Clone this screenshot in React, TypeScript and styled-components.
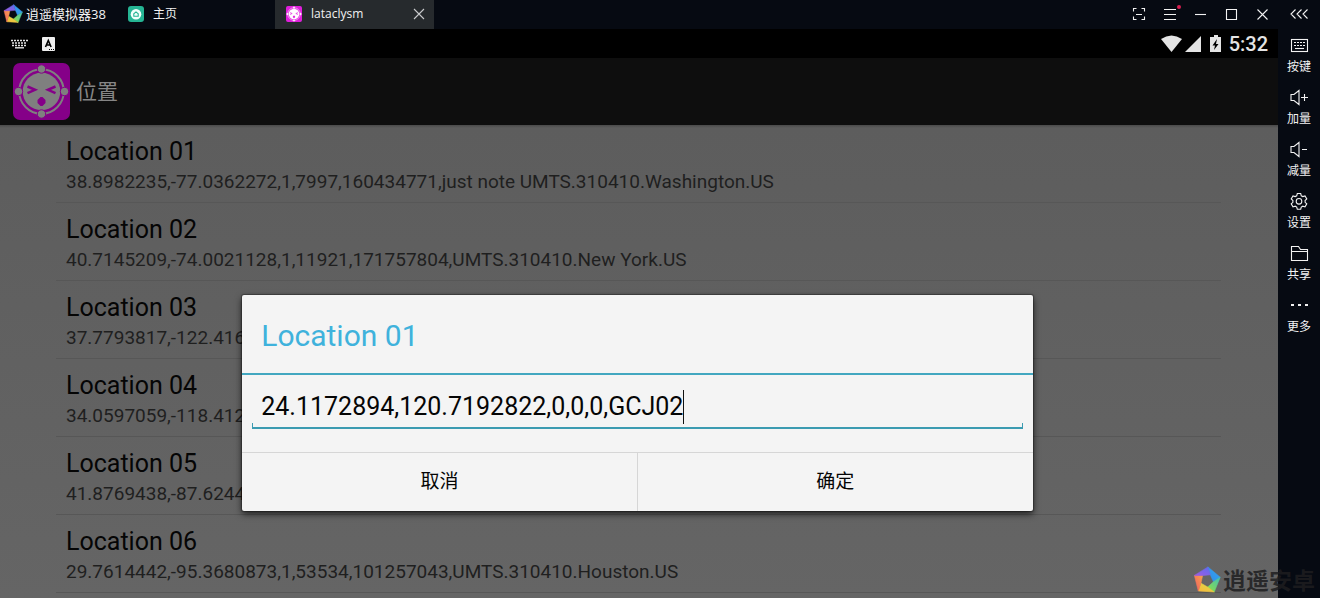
import React, { useId, useState } from "react";
import styled, { createGlobalStyle } from "styled-components";

const GlobalStyle = createGlobalStyle`
  *, *::before, *::after { box-sizing: border-box; }
  body { margin: 0; background: #060a12; overflow: hidden; }
  button { margin: 0; padding: 0; border: 0; background: none; color: inherit; font: inherit; cursor: pointer; }
`;

const uiFont = `"Open Sans", "Noto Sans CJK SC", sans-serif`;
const androidFont = `Roboto, "Noto Sans CJK SC", sans-serif`;

const Shell = styled.div`
  position: relative;
  display: flex;
  flex-direction: column;
  height: 100vh;
  overflow: hidden;
  background: #060a12;
  color: #f2f2f2;
  font-family: ${uiFont};
`;

const TitleBar = styled.header`
  display: flex;
  align-items: stretch;
  flex: none;
  height: 29px;
  font-size: 12px;
  line-height: 28px;
`;

const Brand = styled.h1`
  display: flex;
  align-items: center;
  gap: 3px;
  margin: 0;
  padding-left: 3px;
  padding-bottom: 2px;
  width: 117px;
  font-size: 13px;
  font-weight: 400;
  line-height: 28px;
  white-space: nowrap;
`;

const Tab = styled.button<{ $active?: boolean }>`
  display: flex;
  align-items: center;
  gap: 9px;
  width: ${(p) => (p.$active ? "134px" : "158px")};
  padding: 0 0 2px 11px;
  text-align: left;
`;

const ActiveTab = styled.div`
  display: flex;
  width: 159px;
  background: #262a2d;
`;

const TabClose = styled.button`
  display: grid;
  place-items: center;
  width: 20px;
  padding-bottom: 1px;
  color: #c8cacc;
`;

const WindowControls = styled.div`
  display: flex;
  margin-left: auto;
`;

const WindowButton = styled.button<{ $last?: boolean }>`
  display: grid;
  place-items: center;
  width: ${(p) => (p.$last ? "42px" : "31px")};
  padding-bottom: 2px;
`;

const Body = styled.div`
  display: flex;
  flex: 1;
  min-height: 0;
`;

const Device = styled.main`
  position: relative;
  display: flex;
  flex-direction: column;
  flex: 1;
  min-width: 0;
  overflow: hidden;
  font-family: ${androidFont};
`;

const StatusBar = styled.div`
  display: flex;
  align-items: center;
  flex: none;
  height: 29px;
  padding: 0 10px 0 11px;
  gap: 14px;
  background: #000;
  color: #e4e4e4;
`;

const StatusRight = styled.div`
  display: flex;
  align-items: center;
  gap: 7px;
  margin-left: auto;
  font-size: 20px;
  font-weight: 500;
  line-height: 29px;
`;

const StatusTime = styled.time`
  padding-top: 2px;
`;

const AppBar = styled.div`
  display: flex;
  align-items: center;
  flex: none;
  gap: 6px;
  height: 67px;
  padding-left: 13px;
  background: #0e0e0e;
  color: #868686;
`;

const AppTitle = styled.h2`
  margin: 0;
  font-size: 21px;
  font-weight: 400;
  line-height: 30px;
`;

const List = styled.ul`
  flex: 1;
  margin: 0;
  padding: 0 57px 0 56px;
  list-style: none;
  background: linear-gradient(#4a4a4a, #5d5d5d 3px, #656565);
`;

const Row = styled.li`
  height: 78px;
  padding: 12px 10px 0;
  border-bottom: 1px solid #575757;
  white-space: nowrap;
`;

const RowTitle = styled.div`
  color: #050505;
  font-size: 25px;
  line-height: 30px;
`;

const RowDetail = styled.div`
  color: #1f1f1f;
  font-size: 19px;
  line-height: 30px;
`;

const Scrim = styled.div`
  position: absolute;
  inset: 29px 0 0;
  display: flex;
  align-items: flex-start;
  justify-content: center;
  padding: 237px 3px 0 0;
`;

const Dialog = styled.form`
  width: 62%;
  border-radius: 2px;
  background: #f4f4f4;
  color: #050505;
  box-shadow: 0 3px 7px rgba(0, 0, 0, 0.7), 0 0 1px 1px rgba(0, 0, 0, 0.3);
`;

const DialogTitle = styled.label`
  display: block;
  height: 80px;
  padding: 23px 19px 0;
  border-bottom: 2px solid #42a7c0;
  color: #3fb2dc;
  font-size: 30px;
  line-height: 36px;
`;

const Field = styled.div`
  display: flex;
  align-items: center;
  height: 54px;
  margin: 0 10px 23px;
  padding: 10px 9px 0;
  background:
    linear-gradient(#3b9bb1, #3b9bb1) left bottom / 100% 2px no-repeat,
    linear-gradient(#3b9bb1, #3b9bb1) left bottom / 1px 6px no-repeat,
    linear-gradient(#3b9bb1, #3b9bb1) right bottom / 1px 6px no-repeat;
`;

const Input = styled.input`
  field-sizing: content;
  max-width: 100%;
  padding: 0;
  border: 0;
  outline: 0;
  background: none;
  color: #050505;
  caret-color: transparent;
  font-family: ${androidFont};
  font-size: 25px;
  line-height: 34px;
`;

const Caret = styled.span`
  flex: none;
  width: 1px;
  height: 34px;
  background: #111;
`;

const DialogActions = styled.div`
  display: flex;
  height: 59px;
  border-top: 1px solid #d6d6d6;
`;

const DialogButton = styled.button`
  flex: 1;
  font-size: 19px;
  line-height: 28px;

  & + & { border-left: 1px solid #d6d6d6; }
`;

const SideBar = styled.nav`
  display: flex;
  flex-direction: column;
  flex: none;
  width: 42px;
`;

const SideButton = styled.button`
  display: flex;
  flex-direction: column;
  align-items: center;
  gap: 3px;
  height: 52px;
  padding-top: 6px;
  font-size: 12px;
  line-height: 18px;
`;

const Watermark = styled.div`
  position: absolute;
  right: 5px;
  bottom: 3px;
  display: flex;
  align-items: center;
  gap: 2px;
  color: rgba(30, 30, 32, 0.85);
  font-size: 23px;
  font-weight: 700;
  line-height: 30px;
  pointer-events: none;
`;

const wheelColors = [
  ["#35a3f3", "#2f8fe6"],
  ["#3fc0ba", "#94e03c"],
  ["#d8e04a", "#f9b53a"],
  ["#f9a04b", "#ee5d62"],
  ["#5a6cf0", "#a05be0"],
];

const ringPoint = (radius: number, degrees: number) => {
  const a = (degrees * Math.PI) / 180;
  return `${(14 + radius * Math.sin(a)).toFixed(2)},${(14.5 - radius * Math.cos(a)).toFixed(2)}`;
};

function Pinwheel({ size }: { size: number }) {
  const id = useId();
  return (
    <svg width={size} height={size} viewBox="0 0 28 28" aria-hidden="true">
      <defs>
        {wheelColors.map(([a, b], i) => (
          <linearGradient key={i} id={`${id}${i}`} x1="1" y1="0" x2="0" y2="1">
            <stop offset="0" stopColor={a} />
            <stop offset="1" stopColor={b} />
          </linearGradient>
        ))}
      </defs>
      {wheelColors.map((_, i) => {
        const d = i * 72 + 4;
        return (
          <polygon
            key={i}
            fill={`url(#${id}${i})`}
            stroke={`url(#${id}${i})`}
            strokeWidth="0.6"
            strokeLinejoin="round"
            points={[ringPoint(13.6, d), ringPoint(13.6, d + 72), ringPoint(6.6, d + 98), ringPoint(6.6, d + 26)].join(" ")}
          />
        );
      })}
    </svg>
  );
}

function FaceIcon({ size, back, face }: { size: number; back: string; face: string }) {
  return (
    <svg width={size} height={size} viewBox="0 0 57 57" fill="none" aria-hidden="true">
      <rect width="57" height="57" rx="7" fill={back} />
      <circle cx="28.5" cy="28.5" r="22.3" stroke={face} strokeWidth="2" />
      <circle cx="28.5" cy="28.5" r="18.8" fill={face} />
      <g fill={face} stroke={back} strokeWidth="1">
        <circle cx="28.5" cy="6" r="4.2" />
        <circle cx="5.5" cy="28.5" r="4.2" />
        <circle cx="51.5" cy="28.5" r="4.2" />
        <circle cx="28.5" cy="51" r="4.2" />
      </g>
      <path d="M14.500 23.500l7.500 3.300-7.500 3.300M42.500 23.500l-7.500 3.300 7.500 3.300" stroke={back} strokeWidth="2.500" />
      <path d="M27.500 34h2l3 3v3l-3 3h-2l-3-3v-3z" fill={back} />
    </svg>
  );
}

const HomeIcon = () => (
  <svg width="16" height="16" viewBox="0 0 16 16" fill="none" aria-hidden="true">
    <rect width="16" height="16" rx="3" fill="#25b594" />
    <circle cx="8" cy="8.300" r="5.300" fill="#f2fffb" />
    <path d="M5.800 10.300V7.800L8 5.900l2.200 1.900v2.500z" stroke="#25b594" strokeWidth="1.100" />
  </svg>
);

const Line = ({ w = 16, h = 16, d, children }: { w?: number; h?: number; d?: string; children?: React.ReactNode }) => (
  <svg width={w} height={h} viewBox={`0 0 ${w} ${h}`} fill="none" stroke="currentColor" strokeWidth="1.100" aria-hidden="true">
    {d && <path d={d} />}
    {children}
  </svg>
);

const controls = [
  { name: "全屏", icon: <Line d="M2.500 5.500v-3h3M10.500 2.500h3v3M13.500 10.500v3h-3M5.500 13.500h-3v-3M5 8.500h6" /> },
  {
    name: "菜单",
    icon: (
      <Line w={22} h={20} d="M5 5.500h12M5 10.500h12M5 15.500h12">
        <circle cx="20" cy="3" r="2" fill="#d81e50" stroke="none" />
      </Line>
    ),
  },
  { name: "最小化", icon: <Line d="M2 8.500h11" /> },
  { name: "最大化", icon: <Line d="M2.500 3.500h10v10h-10z" /> },
  { name: "关闭", icon: <Line d="M2.500 3.500l10 10M12.500 3.500l-10 10" /> },
];

const speaker = "M2 7.500v6h3l5 4v-14l-5 4z";
const gear =
  "M8.300 2.500h3.400l.6 2.300 1.500.8 2.200-.7 1.800 3-1.700 1.600v1.800l1.700 1.600-1.800 3-2.200-.7-1.500.8-.6 2.200H8.300l-.6-2.200-1.500-.8-2.200.7-1.800-3 1.700-1.600V9.500L2.200 7.900l1.800-3 2.200.7 1.500-.8z";

const tools = [
  {
    label: "按键",
    icon: (
      <Line w={20} h={20}>
        <rect x="2.500" y="4.500" width="16" height="12" />
        <path d="M5 7.500h11M5 10.500h11" strokeDasharray="2 1" />
        <path d="M6 13.500h9" />
      </Line>
    ),
  },
  { label: "加量", icon: <Line w={20} h={20} d={`${speaker}M12 10.500h7M15.500 7v7`} /> },
  { label: "减量", icon: <Line w={20} h={20} d={`${speaker}M13 10.500h5`} /> },
  {
    label: "设置",
    icon: (
      <Line w={20} h={20} d={gear}>
        <circle cx="10" cy="10.300" r="2.800" />
      </Line>
    ),
  },
  { label: "共享", icon: <Line w={20} h={20} d="M2.500 17.500v-14h7l2 3h7v11zM2.500 8.500h16" /> },
  {
    label: "更多",
    icon: (
      <Line w={20} h={20}>
        <path d="M2 10h3M9 10h3M16 10h3" strokeWidth="2" />
      </Line>
    ),
  },
];

const locations = [
  ["Location 01", "38.8982235,-77.0362272,1,7997,160434771,just note UMTS.310410.Washington.US"],
  ["Location 02", "40.7145209,-74.0021128,1,11921,171757804,UMTS.310410.New York.US"],
  ["Location 03", "37.7793817,-122.416"],
  ["Location 04", "34.0597059,-118.412"],
  ["Location 05", "41.8769438,-87.6244"],
  ["Location 06", "29.7614442,-95.3680873,1,53534,101257043,UMTS.310410.Houston.US"],
];

export default function App() {
  const [value, setValue] = useState("24.1172894,120.7192822,0,0,0,GCJ02");

  return (
    <Shell>
      <GlobalStyle />
      <TitleBar>
        <Brand>
          <Pinwheel size={20} />
          逍遥模拟器38
        </Brand>
        <Tab type="button">
          <HomeIcon />
          主页
        </Tab>
        <ActiveTab>
          <Tab type="button" $active>
            <FaceIcon size={16} back="#e01fdc" face="#fff" />
            lataclysm
          </Tab>
          <TabClose type="button" aria-label="关闭标签">
            <Line w={12} h={12} d="M1 1l10 10M11 1L1 11" />
          </TabClose>
        </ActiveTab>
        <WindowControls>
          {controls.map((c) => (
            <WindowButton key={c.name} type="button" aria-label={c.name}>
              {c.icon}
            </WindowButton>
          ))}
          <WindowButton type="button" aria-label="收起" $last>
            <Line w={18} h={12} d="M5.500 1.500L1 6l4.500 4.500M11.500 1.500L7 6l4.500 4.500M17.500 1.500L13 6l4.500 4.500" />
          </WindowButton>
        </WindowControls>
      </TitleBar>

      <Body>
        <Device>
          <StatusBar>
            <svg width="17" height="10" viewBox="0 0 17 10" fill="none" stroke="currentColor" strokeWidth="1.500" aria-hidden="true">
              <path d="M0 1.500h17M1 4h15M1 6.500h15" strokeDasharray="2 1" />
              <path d="M4 8.800h9" strokeWidth="1.400" />
            </svg>
            <svg width="14" height="14" viewBox="0 0 14 14" aria-hidden="true">
              <rect width="13" height="14" rx="1" fill="#efefef" />
              <path d="M3.500 10l2.800-6.500L9.100 10M4.500 8h3.700" fill="none" stroke="#000" strokeWidth="1.600" />
              <path d="M7 12.500h5" stroke="#000" strokeDasharray="1 1" />
            </svg>
            <StatusRight>
              <svg width="62" height="20" viewBox="0 0 62 20" fill="currentColor" aria-hidden="true">
                <path d="M1 5Q11.500-2 22 5L11.500 18z" />
                <path d="M41 2v16H25z" />
                <path d="M54 1h4v2h3v15H50V3h4z" />
                <path d="M57 5l-4.500 6.500H55L54 16l4.500-6H56z" fill="#000" />
              </svg>
              <StatusTime>5:32</StatusTime>
            </StatusRight>
          </StatusBar>

          <AppBar>
            <FaceIcon size={57} back="#850088" face="#7f7f7f" />
            <AppTitle>位置</AppTitle>
          </AppBar>

          <List>
            {locations.map(([name, detail]) => (
              <Row key={name}>
                <RowTitle>{name}</RowTitle>
                <RowDetail>{detail}</RowDetail>
              </Row>
            ))}
          </List>

          <Scrim>
            <Dialog role="dialog" aria-labelledby="dialog-title" onSubmit={(e) => e.preventDefault()}>
              <DialogTitle id="dialog-title" htmlFor="location-value">
                Location 01
              </DialogTitle>
              <Field>
                <Input id="location-value" type="text" value={value} onChange={(e) => setValue(e.target.value)} />
                <Caret />
              </Field>
              <DialogActions>
                <DialogButton type="button">取消</DialogButton>
                <DialogButton type="submit">确定</DialogButton>
              </DialogActions>
            </Dialog>
          </Scrim>
        </Device>

        <SideBar aria-label="工具">
          {tools.map((t) => (
            <SideButton key={t.label} type="button">
              {t.icon}
              {t.label}
            </SideButton>
          ))}
        </SideBar>
      </Body>

      <Watermark>
        <Pinwheel size={28} />
        逍遥安卓
      </Watermark>
    </Shell>
  );
}
